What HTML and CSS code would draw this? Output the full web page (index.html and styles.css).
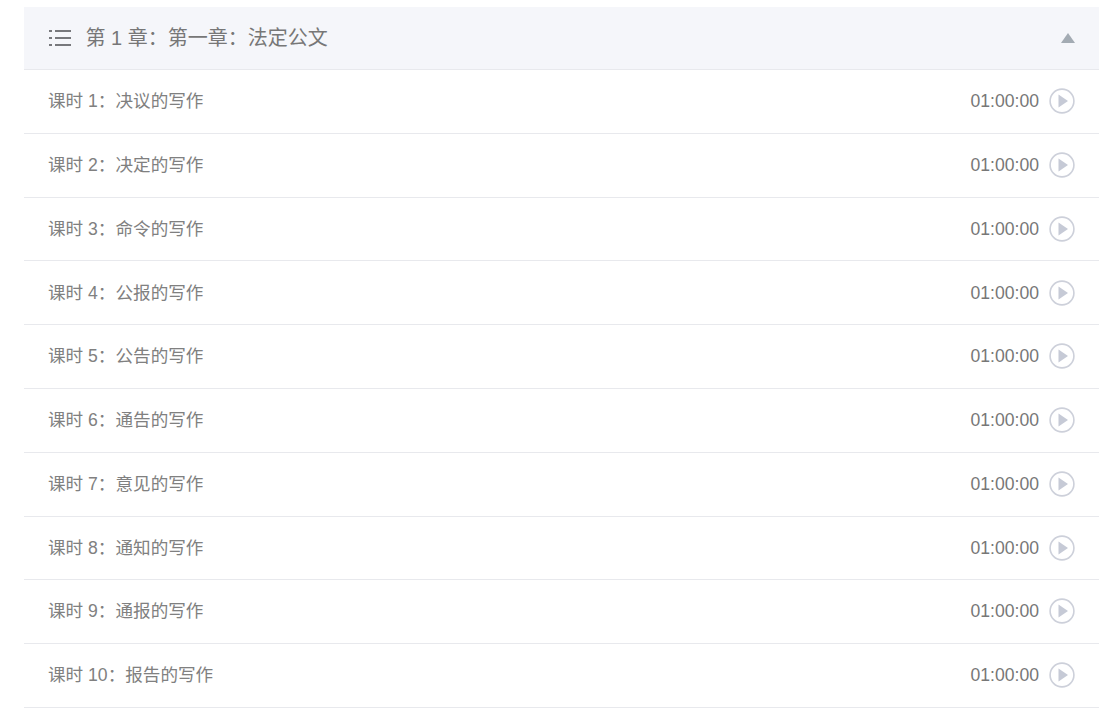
FILE: index.html
```html
<!DOCTYPE html>
<html lang="zh">
<head>
<meta charset="utf-8">
<title>第一章：法定公文</title>
<link rel="stylesheet" href="styles.css">
</head>
<body>
<section class="chapter">
  <header class="chapter-head">
    <svg class="list-icon" width="22" height="18" viewBox="0 0 22 18"><path d="M0 1h3v2H0zM6 1h16v2H6zM0 8h3v2H0zM6 8h16v2H6zM0 15h3v2H0zM6 15h16v2H6z"/></svg>
    <h2 class="chapter-title">第 1 章：第一章：法定公文</h2>
    <svg class="caret" width="14" height="10" viewBox="0 0 14 10"><path d="M7 0l7 10H0z"/></svg>
  </header>
  <ul class="lessons">
    <li class="lesson"><span class="lesson-name">课时 1：决议的写作</span><span class="lesson-time">01:00:00</span><svg class="play" width="26" height="26" viewBox="0 0 26 26"><circle cx="13" cy="13" r="11.9"/><path d="M9.5 6.5v13l9.5-6.5z"/></svg></li>
    <li class="lesson"><span class="lesson-name">课时 2：决定的写作</span><span class="lesson-time">01:00:00</span><svg class="play" width="26" height="26" viewBox="0 0 26 26"><circle cx="13" cy="13" r="11.9"/><path d="M9.5 6.5v13l9.5-6.5z"/></svg></li>
    <li class="lesson"><span class="lesson-name">课时 3：命令的写作</span><span class="lesson-time">01:00:00</span><svg class="play" width="26" height="26" viewBox="0 0 26 26"><circle cx="13" cy="13" r="11.9"/><path d="M9.5 6.5v13l9.5-6.5z"/></svg></li>
    <li class="lesson"><span class="lesson-name">课时 4：公报的写作</span><span class="lesson-time">01:00:00</span><svg class="play" width="26" height="26" viewBox="0 0 26 26"><circle cx="13" cy="13" r="11.9"/><path d="M9.5 6.5v13l9.5-6.5z"/></svg></li>
    <li class="lesson"><span class="lesson-name">课时 5：公告的写作</span><span class="lesson-time">01:00:00</span><svg class="play" width="26" height="26" viewBox="0 0 26 26"><circle cx="13" cy="13" r="11.9"/><path d="M9.5 6.5v13l9.5-6.5z"/></svg></li>
    <li class="lesson"><span class="lesson-name">课时 6：通告的写作</span><span class="lesson-time">01:00:00</span><svg class="play" width="26" height="26" viewBox="0 0 26 26"><circle cx="13" cy="13" r="11.9"/><path d="M9.5 6.5v13l9.5-6.5z"/></svg></li>
    <li class="lesson"><span class="lesson-name">课时 7：意见的写作</span><span class="lesson-time">01:00:00</span><svg class="play" width="26" height="26" viewBox="0 0 26 26"><circle cx="13" cy="13" r="11.9"/><path d="M9.5 6.5v13l9.5-6.5z"/></svg></li>
    <li class="lesson"><span class="lesson-name">课时 8：通知的写作</span><span class="lesson-time">01:00:00</span><svg class="play" width="26" height="26" viewBox="0 0 26 26"><circle cx="13" cy="13" r="11.9"/><path d="M9.5 6.5v13l9.5-6.5z"/></svg></li>
    <li class="lesson"><span class="lesson-name">课时 9：通报的写作</span><span class="lesson-time">01:00:00</span><svg class="play" width="26" height="26" viewBox="0 0 26 26"><circle cx="13" cy="13" r="11.9"/><path d="M9.5 6.5v13l9.5-6.5z"/></svg></li>
    <li class="lesson"><span class="lesson-name">课时 10：报告的写作</span><span class="lesson-time">01:00:00</span><svg class="play" width="26" height="26" viewBox="0 0 26 26"><circle cx="13" cy="13" r="11.9"/><path d="M9.5 6.5v13l9.5-6.5z"/></svg></li>
  </ul>
</section>
</body>
</html>
```
FILE: styles.css
```css
* { box-sizing: border-box; }
html, body { margin: 0; padding: 0; background: #fff; }
body {
  height: 709px;
  overflow: hidden;
  padding: 7px 9px 0 24px;
  font-family: "Liberation Sans", "Noto Sans CJK SC", sans-serif;
  color: #777;
}
.chapter-head {
  display: flex;
  align-items: center;
  height: 63.2px;
  padding: 0 24.5px 0 25px;
  background: #f5f6fa;
  border-bottom: 1px solid #e8e9ed;
}
.list-icon { fill: #77787c; margin-right: 14.5px; flex: none; }
.chapter-title {
  flex: 1;
  margin: 0;
  font-size: 20px;
  font-weight: 400;
  line-height: 28px;
  color: #777;
}
.caret { fill: #a3abb3; flex: none; }
.lessons { list-style: none; margin: 0; padding: 0; }
.lesson {
  display: flex;
  align-items: center;
  height: 63.78px;
  padding: 0 24px 0.7px 24px;
  border-bottom: 1px solid #e8e9ed;
  font-size: 17.6px;
  line-height: 24px;
}
.lesson-name { flex: 1; color: #808080; }
.lesson-time { margin-right: 10px; color: #777; }
.play { flex: none; }
.play circle { fill: none; stroke: #cdd0da; stroke-width: 1.6; }
.play path { fill: #c6cad6; }
```
